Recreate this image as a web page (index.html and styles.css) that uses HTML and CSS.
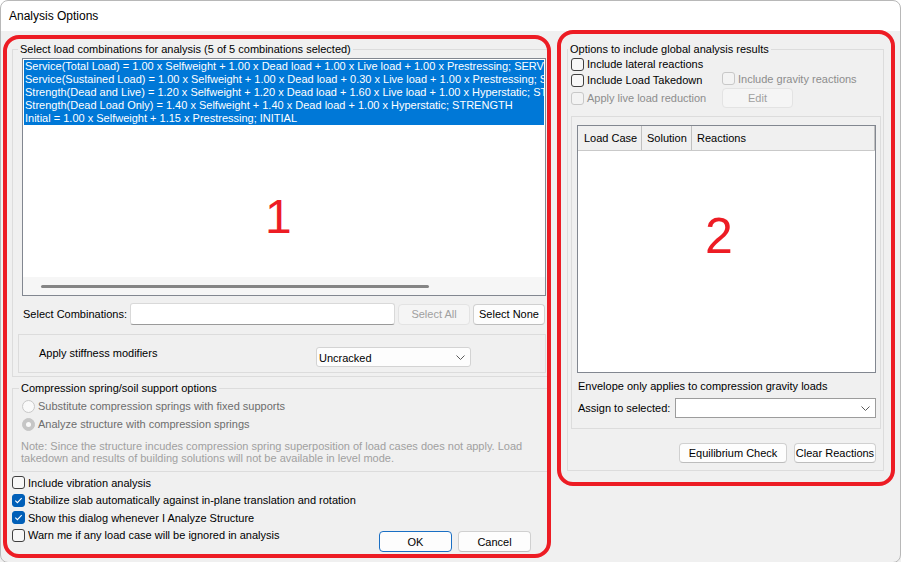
FILE: index.html
```html
<!DOCTYPE html>
<html>
<head>
<meta charset="utf-8">
<title>Analysis Options</title>
<link rel="stylesheet" href="styles.css">
</head>
<body>
<div class="window">
  <div class="titlebar">Analysis Options</div>
  <div class="main">
    <div class="col-left">
      <fieldset class="group g-combos">
        <legend>Select load combinations for analysis (5 of 5 combinations selected)</legend>
        <div class="listbox">
          <div class="rows">
            <div class="row">Service(Total Load) = 1.00 x Selfweight + 1.00 x Dead load + 1.00 x Live load + 1.00 x Prestressing; SERVICE</div>
            <div class="row">Service(Sustained Load) = 1.00 x Selfweight + 1.00 x Dead load + 0.30 x Live load + 1.00 x Prestressing; SERVICE</div>
            <div class="row">Strength(Dead and Live) = 1.20 x Selfweight + 1.20 x Dead load + 1.60 x Live load + 1.00 x Hyperstatic; STRENGTH</div>
            <div class="row">Strength(Dead Load Only) = 1.40 x Selfweight + 1.40 x Dead load + 1.00 x Hyperstatic; STRENGTH</div>
            <div class="row">Initial = 1.00 x Selfweight + 1.15 x Prestressing; INITIAL</div>
          </div>
          <div class="hscroll"><div class="thumb"></div></div>
        </div>
        <div class="select-row">
          <span class="select-label">Select Combinations:</span>
          <div class="textbox"></div>
          <button class="btn small disabled">Select All</button>
          <button class="btn small">Select None</button>
        </div>
        <div class="stiff">
          <span class="stiff-label">Apply stiffness modifiers</span>
          <div class="dropdown">
            <span>Uncracked</span>
            <svg class="chev" width="9" height="5" viewBox="0 0 9 5"><path d="M0.5 0.5 L4.5 4.5 L8.5 0.5" fill="none" stroke="#5a5a5a" stroke-width="1"/></svg>
          </div>
        </div>
      </fieldset>

      <fieldset class="group g-comp">
        <legend>Compression spring/soil support options</legend>
        <div class="radio-row first"><span class="radio"></span>Substitute compression springs with fixed supports</div>
        <div class="radio-row"><span class="radio on"></span>Analyze structure with compression springs</div>
        <p class="note">Note: Since the structure incudes compression spring superposition of load cases does not apply. Load<br>takedown and results of building solutions will not be available in level mode.</p>
      </fieldset>

      <div class="bottom">
        <div class="checks">
          <div class="check-row"><span class="cb"></span>Include vibration analysis</div>
          <div class="check-row"><span class="cb on"><svg width="11" height="11" viewBox="0 0 11 11"><path d="M2.3 5.6 L4.4 7.7 L8.7 3.2" fill="none" stroke="#fff" stroke-width="1.1"/></svg></span>Stabilize slab automatically against in-plane translation and rotation</div>
          <div class="check-row"><span class="cb on"><svg width="11" height="11" viewBox="0 0 11 11"><path d="M2.3 5.6 L4.4 7.7 L8.7 3.2" fill="none" stroke="#fff" stroke-width="1.1"/></svg></span>Show this dialog whenever I Analyze Structure</div>
          <div class="check-row"><span class="cb"></span>Warn me if any load case will be ignored in analysis</div>
        </div>
        <div class="dlg-buttons">
          <button class="btn dlg default">OK</button>
          <button class="btn dlg">Cancel</button>
        </div>
      </div>
    </div>

    <div class="col-right">
      <fieldset class="group g-opts">
        <legend>Options to include global analysis results</legend>
        <div class="opts">
          <div class="check-row r1"><span class="cb"></span>Include lateral reactions</div>
          <div></div>
          <div class="check-row r2"><span class="cb"></span>Include Load Takedown</div>
          <div class="check-row r2 grav dis"><span class="cb"></span>Include gravity reactions</div>
          <div class="check-row r3 dis"><span class="cb"></span>Apply live load reduction</div>
          <button class="btn edit disabled">Edit</button>
        </div>
        <div class="inner">
          <div class="table">
            <div class="thead">
              <div class="th c1">Load Case</div>
              <div class="th c2">Solution</div>
              <div class="th c3">Reactions</div>
            </div>
          </div>
          <div class="envelope">Envelope only applies to compression gravity loads</div>
          <div class="assign">
            <span class="assign-label">Assign to selected:</span>
            <div class="combo">
              <svg class="chev" width="9" height="5" viewBox="0 0 9 5"><path d="M0.5 0.5 L4.5 4.5 L8.5 0.5" fill="none" stroke="#5a5a5a" stroke-width="1"/></svg>
            </div>
          </div>
        </div>
        <div class="rbuttons">
          <button class="btn eq">Equilibrium Check</button>
          <button class="btn clr">Clear Reactions</button>
        </div>
      </fieldset>
    </div>
  </div>

  <div class="mark mark-left"></div>
  <div class="mark mark-right"></div>
  <div class="num num1">1</div>
  <div class="num num2">2</div>
</div>
</body>
</html>
```

FILE: styles.css
```css
* { box-sizing: border-box; }
html, body { margin: 0; padding: 0; }
body {
  width: 901px;
  height: 562px;
  overflow: hidden;
  background: #ffffff;
  font-family: "Liberation Sans", Arial, sans-serif;
  font-size: 11px;
  color: #000;
}
.window {
  position: relative;
  width: 901px;
  height: 562px;
  background: #f0f0f0;
  overflow: hidden;
}
.window::after {
  content: "";
  position: absolute;
  left: 0;
  top: 0;
  width: 899px;
  height: 561px;
  border: 1px solid #b8b8b8;
  border-radius: 8px;
  pointer-events: none;
}
.titlebar {
  height: 31px;
  background: #fff;
  padding-left: 9px;
  line-height: 32px;
  font-size: 12px;
}
.main {
  display: flex;
  height: 531px;
}
.col-left {
  width: 557px;
  flex: none;
  padding: 0 6px 0 12px;
}
.col-right {
  flex: 1;
  padding-left: 10px;
}

/* group boxes */
.group {
  margin: 0;
  padding: 0;
  border: 1px solid #dcdcdc;
  min-width: 0;
}
.group > legend {
  padding: 0 2px;
  margin-left: 5px;
  line-height: 14px;
}
.g-combos { margin-top: 11px; padding-bottom: 3px; }
.g-comp { margin-top: 4px; padding-bottom: 7px; }
.g-comp > legend { margin-left: 6px; }
.g-opts { margin-top: 11px; width: 317px; padding-bottom: 7px; }
.g-opts > legend { margin-left: 0; }

/* list box */
.listbox {
  margin: 2px 4px 0 9px;
  height: 238px;
  background: #fff;
  border: 1px solid #828790;
  display: flex;
  flex-direction: column;
}
.rows {
  flex: 1;
  overflow: hidden;
  padding: 1px 1px 0 1px;
}
.row {
  height: 13px;
  line-height: 13px;
  background: #0078d7;
  color: #fff;
  white-space: nowrap;
  overflow: hidden;
  padding-left: 1px;
}
.hscroll {
  height: 18px;
  background: #f6f6f6;
  display: flex;
  align-items: center;
  padding-left: 18px;
}
.thumb {
  width: 388px;
  height: 3px;
  border-radius: 2px;
  background: #858585;
}

/* select row */
.select-row {
  display: flex;
  align-items: center;
  margin: 7px 4px 0 10px;
  height: 22px;
}
.select-label { width: 107px; flex: none; }
.textbox {
  width: 265px;
  height: 22px;
  background: #fff;
  border: 1px solid #d9d9d9;
  border-bottom-color: #9a9a9a;
  border-radius: 3px;
  flex: none;
}
.btn {
  font: inherit;
  color: #000;
  background: #fdfdfd;
  border: 1px solid #d0d0d0;
  border-bottom-color: #bdbdbd;
  border-radius: 4px;
  padding: 0;
  height: 21px;
  flex: none;
}
.btn.small { width: 72px; margin-left: 3px; }
.btn.disabled {
  background: #f5f5f5;
  border-color: #e3e3e3;
  color: #a0a0a0;
}

/* stiffness box */
.stiff {
  margin: 9px 4px 0 5px;
  height: 39px;
  border: 1px solid #dcdcdc;
  display: flex;
  align-items: flex-start;
  padding: 11px 0 0 20px;
}
.stiff-label { width: 277px; line-height: 14px; flex: none; }
.dropdown {
  margin-top: 1px;
  width: 155px;
  height: 20px;
  background: #fdfdfd;
  border: 1px solid #d3d3d3;
  border-radius: 3px;
  display: flex;
  align-items: center;
  justify-content: space-between;
  padding: 1px 5px 0 2px;
}
.chev { display: block; }

/* radios */
.radio-row {
  height: 18px;
  display: flex;
  align-items: center;
  padding-left: 9px;
  color: #6d6d6d;
}
.radio-row.first { margin-top: 2px; }
.radio {
  width: 13px;
  height: 13px;
  border-radius: 50%;
  border: 1px solid #c8c8c8;
  background: #f9f9f9;
  margin-right: 3px;
  flex: none;
  display: flex;
  align-items: center;
  justify-content: center;
}
.radio.on { background: #c6c6c6; border-color: #c6c6c6; }
.radio.on::after {
  content: "";
  width: 5px;
  height: 5px;
  border-radius: 50%;
  background: #fafafa;
}
.note {
  margin: 7px 0 0 8px;
  line-height: 12px;
  color: #a0a0a0;
}

/* checkboxes */
.bottom { display: flex; margin-top: 2px; }
.checks { flex: 1; }
.check-row {
  height: 17.5px;
  display: flex;
  align-items: center;
  white-space: nowrap;
}
.cb {
  width: 13px;
  height: 13px;
  border: 1px solid #3f3f3f;
  border-radius: 3px;
  background: #f7f7f7;
  margin-right: 3px;
  flex: none;
  display: flex;
  align-items: center;
  justify-content: center;
}
.cb svg { display: block; }
.cb.on { background: #005fb8; border-color: #005fb8; }
.dis { color: #8d8d8d; }
.dis .cb { border-color: #c8c8c8; background: #f3f3f3; }
.dlg-buttons {
  display: flex;
  gap: 6px;
  margin: 57px 20px 0 0;
}
.btn.dlg { width: 73px; height: 21px; }
.btn.default { border-color: #1a6fc4; }

/* right side */
.opts {
  display: grid;
  grid-template-columns: 151px 1fr;
  grid-template-rows: 16px 16px 20px;
  padding-left: 3px;
}
.opts .check-row { height: auto; }
.grav { margin-top: -3px; }
.btn.edit { width: 71px; height: 20px; }
.inner {
  margin: 8px 2px 0 3px;
  border: 1px solid #dcdcdc;
  padding-bottom: 10px;
}
.table {
  margin: 8px 4px 0 5px;
  height: 248px;
  border: 1px solid #828790;
  background: #fff;
}
.thead {
  display: flex;
  height: 25px;
  background: #f0f0f0;
  border-bottom: 1px solid #c9c9c9;
}
.th {
  line-height: 25px;
  border-right: 1px solid #c0c0c0;
  padding-left: 5px;
  white-space: nowrap;
}
.th.c1 { width: 64px; padding-left: 6px; }
.th.c2 { width: 50px; }
.th.c3 { flex: 1; }
.envelope { margin: 6px 0 0 6px; line-height: 14px; }
.assign {
  display: flex;
  align-items: center;
  margin: 5px 4px 0 6px;
  height: 20px;
}
.assign-label { width: 97px; flex: none; }
.combo {
  flex: 1;
  height: 20px;
  border: 1px solid #9c9c9c;
  background: #fff;
  display: flex;
  align-items: center;
  justify-content: flex-end;
  padding-right: 5px;
}
.rbuttons {
  display: flex;
  justify-content: flex-end;
  gap: 7px;
  margin: 14px 7px 0 0;
}
.btn.eq { width: 108px; height: 20px; }
.btn.clr { width: 82px; height: 20px; }

/* annotation overlays */
.mark {
  position: absolute;
  border: 4px solid #ed1c24;
  border-radius: 16px;
  pointer-events: none;
}
.mark-left { left: 3px; top: 35px; width: 548px; height: 523px; }
.mark-right { left: 557px; top: 30px; width: 338px; height: 456px; }
.num {
  position: absolute;
  font-family: "Liberation Sans", Arial, sans-serif;
  color: #ed1c24;
  pointer-events: none;
}
.num1 { left: 265px; top: 193px; font-size: 48px; line-height: 48px; }
.num2 { left: 705px; top: 211px; font-size: 50px; line-height: 50px; }
```
